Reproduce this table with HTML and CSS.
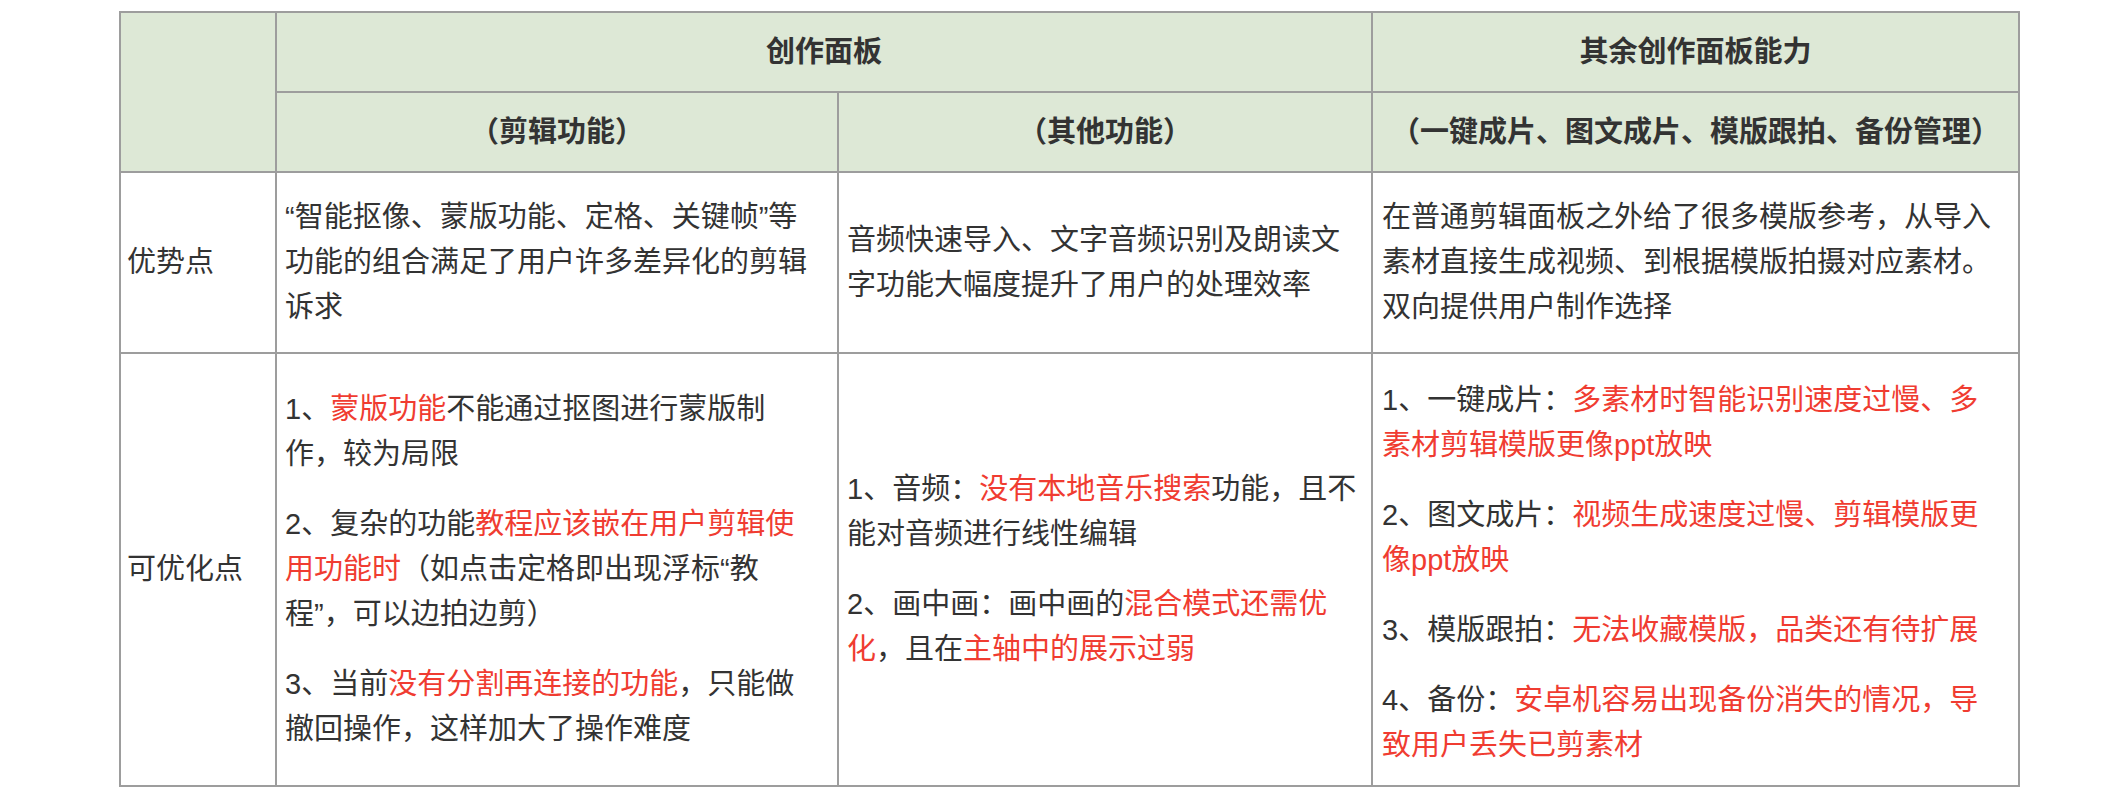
FILE: index.html
```html
<!DOCTYPE html>
<html lang="zh-CN">
<head>
<meta charset="utf-8">
<title>创作面板对比</title>
<link rel="stylesheet" href="styles.css">
</head>
<body>
<div class="page">
  <table class="grid">
    <colgroup>
      <col class="c-label">
      <col class="c-edit">
      <col class="c-other">
      <col class="c-rest">
    </colgroup>
    <thead>
      <tr class="h1">
        <th rowspan="2"></th>
        <th colspan="2">创作面板</th>
        <th>其余创作面板能力</th>
      </tr>
      <tr class="h2">
        <th>（剪辑功能）</th>
        <th>（其他功能）</th>
        <th>（一键成片、图文成片、模版跟拍、备份管理）</th>
      </tr>
    </thead>
    <tbody>
      <tr class="r1">
        <td class="label">优势点</td>
        <td class="edit">“智能抠像、蒙版功能、定格、关键帧”等功能的组合满足了用户许多差异化的剪辑诉求</td>
        <td class="other">音频快速导入、文字音频识别及朗读文字功能大幅度提升了用户的处理效率</td>
        <td class="rest">在普通剪辑面板之外给了很多模版参考，从导入素材直接生成视频、到根据模版拍摄对应素材。双向提供用户制作选择</td>
      </tr>
      <tr class="r2">
        <td class="label">可优化点</td>
        <td class="edit">
          <p>1、<span class="hl">蒙版功能</span>不能通过抠图进行蒙版制作，较为局限</p>
          <p>2、复杂的功能<span class="hl">教程应该嵌在用户剪辑使用功能时</span>（如点击定格即出现浮标“教程”，可以边拍边剪）</p>
          <p>3、当前<span class="hl">没有分割再连接的功能</span>，只能做撤回操作，这样加大了操作难度</p>
        </td>
        <td class="other">
          <p>1、音频：<span class="hl">没有本地音乐搜索</span>功能，且不能对音频进行线性编辑</p>
          <p>2、画中画：画中画的<span class="hl">混合模式还需优化</span>，且在<span class="hl">主轴中的展示过弱</span></p>
        </td>
        <td class="rest">
          <p>1、一键成片：<span class="hl">多素材时智能识别速度过慢、多素材剪辑模版更像ppt放映</span></p>
          <p>2、图文成片：<span class="hl">视频生成速度过慢、剪辑模版更像ppt放映</span></p>
          <p>3、模版跟拍：<span class="hl">无法收藏模版，品类还有待扩展</span></p>
          <p>4、备份：<span class="hl">安卓机容易出现备份消失的情况，导致用户丢失已剪素材</span></p>
        </td>
      </tr>
    </tbody>
  </table>
</div>
</body>
</html>
```

FILE: styles.css
```css
html, body {
  margin: 0;
  padding: 0;
  background: #ffffff;
}

.page {
  padding: 11px 0 0 119px;
  font-family: "Liberation Sans", "Noto Sans CJK SC", sans-serif;
  font-size: 29px;
  line-height: 45px;
  color: #333333;
}

.grid {
  border-collapse: collapse;
  table-layout: fixed;
  width: 1899px;
}

.c-label { width: 156px; }
.c-edit  { width: 562px; }
.c-other { width: 534px; }
.c-rest  { width: 647px; }

.grid th,
.grid td {
  border: 2px solid #9d9d9d;
  padding: 0 8px;
  vertical-align: middle;
  text-align: left;
}

.grid th {
  background: #dde8d6;
  font-weight: 700;
  text-align: center;
  color: #333333;
}

.h1 th { height: 78px; }
.h2 th { height: 78px; }

.r1 td { height: 179px; }
.r2 td { height: 425px; }

.grid td.label {
  padding-left: 6px;
}

.grid td.edit {
  padding: 0 20px 0 8px;
}

.grid td.other {
  padding: 0 8px 0 8px;
}

.grid td.rest {
  padding: 0 21px 0 9px;
}

.grid p {
  margin: 0;
}

.grid p + p {
  margin-top: 25px;
}

.r2 td.rest {
  padding-top: 6px;
}

.hl {
  color: #f03c31;
}
```
